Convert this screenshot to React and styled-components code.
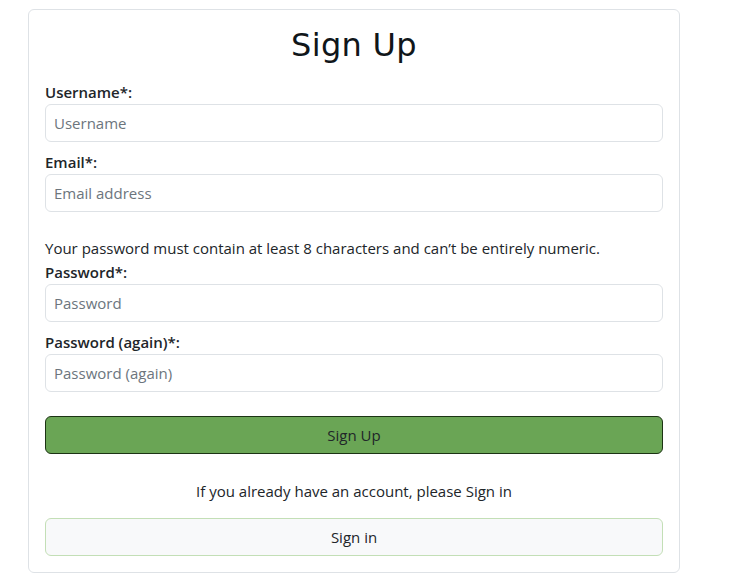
import React from "react";
import styled, { createGlobalStyle } from "styled-components";

const GlobalStyle = createGlobalStyle`
body{
    margin: 0;
    background: #fff;
    font-family: "Open Sans", "Noto Sans", sans-serif;
    color: #212529;
}
*{
    box-sizing: border-box;
}
`

const Page = styled.div`
padding: 9px 0 0 28px;
`

const Card = styled.div`
width: 652px;
border: 1px solid #dee2e6;
border-radius: 6px;
padding: 16px 16px 16px;
`

const Title = styled.h1`
font-family: "DejaVu Sans", Lato, sans-serif;
font-weight: 400;
font-size: 32px;
line-height: 38px;
text-align: center;
margin: 0 0 16px;
letter-spacing: 0.3px;
color: #10161a;
`

const Field = styled.div`
margin-bottom: ${props => props.last ? "24px" : "8px"};
`

const Label = styled.label`
display: block;
font-weight: 600;
font-size: 15px;
line-height: 24px;
`

const Input = styled.input`
display: block;
width: 100%;
height: 38px;
padding: 6px 8px;
font-family: inherit;
font-size: 15px;
color: #212529;
border: 1px solid #dee2e6;
border-radius: 6px;
outline: none;
&::placeholder{
    color: #6c757d;
}
`

const Help = styled.p`
margin: 0;
font-size: 15px;
line-height: 24px;
`

const Button = styled.button`
display: block;
width: 100%;
height: 38px;
font-family: inherit;
font-size: 15px;
color: #212529;
border-radius: 6px;
background: ${props => props.primary ? "#6aa555" : "#f8f9fa"};
border: 1px solid ${props => props.primary ? "#1c3314" : "#c3dfb6"};
cursor: pointer;
`

const Note = styled.p`
text-align: center;
margin: 25px 0 15px;
font-size: 15px;
line-height: 24px;
`

const SignUp = () =>{
    return(
        <Page>
            <GlobalStyle />
            <Card>
                <Title>Sign Up</Title>
                <Field>
                    <Label>Username*:</Label>
                    <Input placeholder="Username" />
                </Field>
                <Field last>
                    <Label>Email*:</Label>
                    <Input placeholder="Email address" />
                </Field>
                <Help>Your password must contain at least 8 characters and can’t be entirely numeric.</Help>
                <Field>
                    <Label>Password*:</Label>
                    <Input type="password" placeholder="Password" />
                </Field>
                <Field last>
                    <Label>Password (again)*:</Label>
                    <Input type="password" placeholder="Password (again)" />
                </Field>
                <Button primary>Sign Up</Button>
                <Note>If you already have an account, please Sign in</Note>
                <Button>Sign in</Button>
            </Card>
        </Page>
    )
};

export default SignUp;
